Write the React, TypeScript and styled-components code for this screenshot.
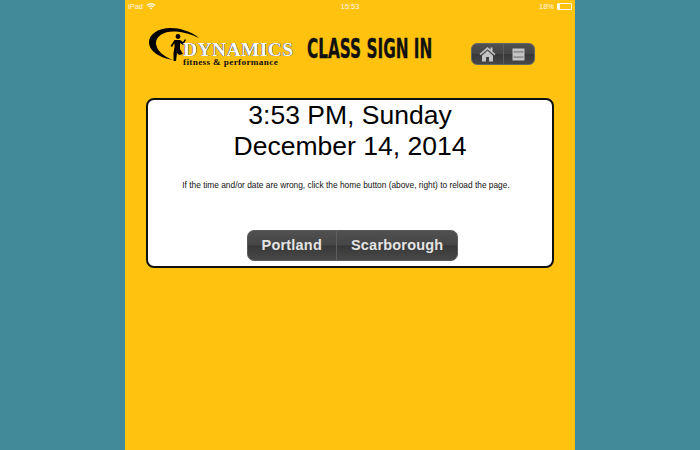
import React from "react";
import styled, { createGlobalStyle } from "styled-components";

const GlobalStyle = createGlobalStyle`
  html, body {
    margin: 0;
    height: 100%;
    background: #428a99;
    font-family: "Liberation Sans", Arial, sans-serif;
  }
  #root {
    height: 100%;
  }
`;

function App() {
  return (
    <PageWrap>
      <GlobalStyle />
      <Tablet>
        <StatusBar>
          <StatusLeft>
            iPad
            <svg width="10" height="8" viewBox="0 0 11 8">
              <path d="M0.5 2.8A7 7 0 0 1 10.5 2.8L9.4 3.9A5.5 5.5 0 0 0 1.6 3.9Z" fill="#fff" />
              <path d="M2.3 4.6A4.4 4.4 0 0 1 8.7 4.6L7.6 5.7A2.9 2.9 0 0 0 3.4 5.7Z" fill="#fff" />
              <path d="M4.1 6.4A1.9 1.9 0 0 1 6.9 6.4L5.5 7.9Z" fill="#fff" />
            </svg>
          </StatusLeft>
          <StatusTime>15:53</StatusTime>
          <StatusRight>
            18%
            <Battery>
              <BatteryFill />
            </Battery>
          </StatusRight>
        </StatusBar>

        <Header>
          <Logo>
            <LogoSwoosh width="62" height="44" viewBox="0 0 62 44">
              <path
                d="M50 10C42 3 30 0 22 0C8 0 0 7 0 14C0 24 12 30 24 32C14 28 7 22 7 15C7 8 15 3 26 3.5C35 4 44 7 50 10Z"
                fill="#000"
              />
              <circle cx="29" cy="8.5" r="2.4" fill="#000" />
              <path
                d="M25.5 12L31 12L34 14L36 11L37 12L34 17L31 15L31 21L34 26L30 27L28 25L27 33L24.5 33L24.5 25L25.5 19L25.5 15L23 19L21.5 18Z"
                fill="#000"
              />
            </LogoSwoosh>
            <LogoName>DYNAMICS</LogoName>
            <LogoTag>fitness &amp; performance</LogoTag>
          </Logo>
          <PageTitle>CLASS SIGN IN</PageTitle>
          <IconGroup>
            <IconButton>
              <svg width="17" height="16" viewBox="0 0 17 16">
                <path d="M8.5 1L0.5 8L1.5 9.2L8.5 3.2L15.5 9.2L16.5 8L13.5 5.4V1.5H11.5V3.6Z" fill="#c4c4c4" />
                <path d="M3 9.5L8.5 4.8L14 9.5V15.5H10V11H7V15.5H3Z" fill="#c4c4c4" />
              </svg>
            </IconButton>
            <IconButton>
              <svg width="13" height="13" viewBox="0 0 13 13">
                <rect x="0.5" y="0.5" width="12" height="12" fill="#c4c4c4" />
                <rect x="1.5" y="3.4" width="10" height="1" fill="#6a6a6a" />
                <rect x="1.5" y="8.6" width="10" height="1" fill="#6a6a6a" />
              </svg>
            </IconButton>
          </IconGroup>
        </Header>

        <Card>
          <Clock>
            3:53 PM, Sunday
            <br />
            December 14, 2014
          </Clock>
          <Note>If the time and/or date are wrong, click the home button (above, right) to reload the page.</Note>
          <LocationGroup>
            <LocationButton>Portland</LocationButton>
            <LocationButton>Scarborough</LocationButton>
          </LocationGroup>
        </Card>
      </Tablet>
    </PageWrap>
  );
}

const glossy = `
  background: linear-gradient(to bottom, #505050 0%, #464646 48%, #383838 52%, #484848 100%);
`;

const PageWrap = styled.div`
  display: flex;
  justify-content: center;
  height: 100%;
  overflow: hidden;
`;

const Tablet = styled.div`
  width: 450px;
  height: 450px;
  background: #ffc20e;
  display: flex;
  flex-direction: column;
`;

const StatusBar = styled.div`
  height: 12px;
  padding: 0 3px 0 3px;
  display: grid;
  grid-template-columns: 1fr auto 1fr;
  align-items: center;
  color: #fff;
  font-size: 7.5px;
  opacity: 0.9;
`;

const StatusLeft = styled.div`
  display: flex;
  align-items: center;
  gap: 3px;
`;

const StatusTime = styled.div``;

const StatusRight = styled.div`
  display: flex;
  justify-content: flex-end;
  align-items: center;
  gap: 3px;
`;

const Battery = styled.div`
  width: 13px;
  height: 5px;
  border: 1px solid #fff;
  border-radius: 1px;
`;

const BatteryFill = styled.div`
  width: 2px;
  height: 100%;
  background: #fff;
`;

const Header = styled.div`
  height: 86px;
  padding-left: 24px;
  display: flex;
  align-items: flex-start;
  box-sizing: border-box;
`;

const Logo = styled.div`
  position: relative;
  width: 146px;
  height: 44px;
  margin-top: 16px;
  flex-shrink: 0;
`;

const LogoSwoosh = styled.svg`
  position: absolute;
  left: 0;
  top: 0;
`;

const LogoName = styled.div`
  position: absolute;
  left: 34px;
  top: 14px;
  font-family: "Liberation Serif", serif;
  font-weight: bold;
  font-size: 19.5px;
  line-height: 16px;
  letter-spacing: 0.4px;
  color: #fff;
  text-shadow: 0.4px 0 0 #555, -0.4px 0 0 #555, 0 0.4px 0 #555, 0 -0.4px 0 #555;
`;

const LogoTag = styled.div`
  position: absolute;
  left: 34px;
  top: 30px;
  font-family: "Liberation Serif", serif;
  font-weight: bold;
  font-size: 9.2px;
  line-height: 9px;
  letter-spacing: 0.35px;
  color: #111;
  white-space: nowrap;
`;

const PageTitle = styled.h1`
  margin: 25px 0 0 12px;
  width: 150px;
  font-family: "DejaVu Sans Condensed", "Liberation Sans Narrow", "Liberation Sans", sans-serif;
  font-weight: bold;
  font-size: 27px;
  line-height: 24px;
  color: #111;
  white-space: nowrap;
  -webkit-text-stroke: 0.3px #111;
  transform-origin: left center;
  transform: scaleX(0.63);
`;

const IconGroup = styled.div`
  display: flex;
  width: 64px;
  height: 22px;
  margin: 31px 0 0 14px;
  border-radius: 6px;
  border: 1px solid #666;
  box-sizing: border-box;
  overflow: hidden;
  ${glossy}
`;

const IconButton = styled.div`
  flex: 1;
  display: flex;
  align-items: center;
  justify-content: center;

  & + & {
    border-left: 1px solid #5e5e5e;
  }
`;

const Card = styled.div`
  width: 408px;
  height: 170px;
  margin-left: 21px;
  box-sizing: border-box;
  background: #fff;
  border: 2px solid #111;
  border-radius: 8px;
  display: flex;
  flex-direction: column;
  align-items: center;
`;

const Clock = styled.div`
  margin-top: 0;
  font-size: 26.5px;
  line-height: 31px;
  text-align: center;
  color: #000;
`;

const Note = styled.p`
  margin: 17px 8px 0 0;
  font-size: 8.35px;
  line-height: 12px;
  color: #111;
`;

const LocationGroup = styled.div`
  display: flex;
  height: 31px;
  margin: 39px 0 0 5px;
  border-radius: 7px;
  border: 1px solid #5a5a5a;
  box-sizing: border-box;
  overflow: hidden;
  ${glossy}
`;

const LocationButton = styled.div`
  padding: 0 14px 2px;
  display: flex;
  align-items: center;
  font-size: 14.5px;
  font-weight: bold;
  color: #e4e4e4;
  letter-spacing: 0.2px;

  & + & {
    border-left: 1px solid #5e5e5e;
  }
`;

export default App;
